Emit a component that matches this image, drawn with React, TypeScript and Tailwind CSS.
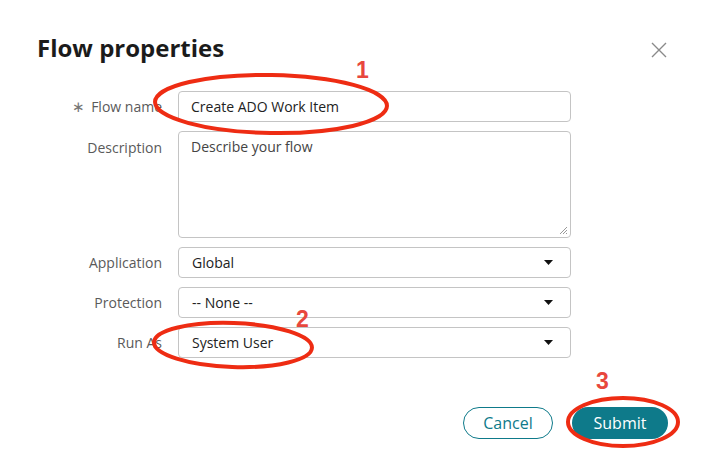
import type { ReactNode } from 'react'

const TEAL = '#0e7a8a'

function Caret() {
  return (
    <svg width="9" height="5" viewBox="0 0 9 5" className="shrink-0">
      <path d="M0 0 L9 0 L4.5 5 Z" fill="#111" />
    </svg>
  )
}

function Row({ label, required, top, children }: { label: string; required?: boolean; top?: boolean; children: ReactNode }) {
  return (
    <>
      <div className={`flex justify-end text-[14px] text-[#5a5a5a] ${top ? 'items-start pt-[6px]' : 'items-center'}`}>
        {required && <span className="mr-[6px] text-[15px] text-[#777]">∗</span>}
        {label}
      </div>
      {children}
    </>
  )
}

function SelectBox({ value }: { value: string }) {
  return (
    <div className="flex h-[31px] items-center justify-between rounded-[4px] border border-[#c4c4c4] bg-white pl-[13px] pr-[17px] text-[14px] text-[#222]">
      <span>{value}</span>
      <Caret />
    </div>
  )
}

function Annotations() {
  return (
    <>
      <svg className="pointer-events-none absolute inset-0" width="712" height="473">
        <ellipse cx="271" cy="104" rx="116" ry="29" fill="none" stroke="#ee2c13" strokeWidth="4" transform="rotate(1 271 104)" />
        <ellipse cx="233" cy="345" rx="79" ry="22" fill="none" stroke="#ee2c13" strokeWidth="4" transform="rotate(2 233 345)" />
        <ellipse cx="623" cy="422" rx="55" ry="24" fill="none" stroke="#ee2c13" strokeWidth="4" />
      </svg>
      <span className="absolute left-[356px] top-[59px] font-['Liberation_Sans',sans-serif] text-[23px] font-bold leading-none text-[#e8473d]">1</span>
      <span className="absolute left-[296px] top-[308px] font-['Liberation_Sans',sans-serif] text-[23px] font-bold leading-none text-[#e8473d]">2</span>
      <span className="absolute left-[596px] top-[370px] font-['Liberation_Sans',sans-serif] text-[23px] font-bold leading-none text-[#e8473d]">3</span>
    </>
  )
}

export default function App() {
  return (
    <div className="relative h-[473px] w-[712px] overflow-hidden bg-white font-['Open_Sans',sans-serif]">
      <div className="flex items-start justify-between pl-[37px] pr-[45px] pt-[33px]">
        <h2 className="text-[24px] font-bold leading-[30px] text-[#1b1b1b]">Flow properties</h2>
        <svg width="16" height="16" viewBox="0 0 16 16" className="mt-[9px]">
          <path d="M1 1 L15 15 M15 1 L1 15" stroke="#8a8a8a" strokeWidth="1.4" />
        </svg>
      </div>

      <div className="mt-[28px] grid grid-cols-[162px_393px] gap-x-[16px] gap-y-[9px]">
        <Row label="Flow name" required>
          <div className="flex h-[31px] items-center rounded-[4px] border border-[#c4c4c4] px-[12px] text-[14px] text-[#222]">
            Create ADO Work Item
          </div>
        </Row>
        <Row label="Description" top>
          <div className="relative h-[107px] rounded-[4px] border border-[#c4c4c4] px-[12px] pt-[4px] text-[14px] text-[#444]">
            Describe your flow
            <svg width="10" height="10" viewBox="0 0 10 10" className="absolute bottom-[2px] right-[2px]">
              <path d="M9 2 L2 9 M9 5 L5 9 M9 8 L8 9" stroke="#999" strokeWidth="1" />
            </svg>
          </div>
        </Row>
        <Row label="Application">
          <SelectBox value="Global" />
        </Row>
        <Row label="Protection">
          <SelectBox value="-- None --" />
        </Row>
        <Row label="Run As">
          <SelectBox value="System User" />
        </Row>
      </div>

      <div className="mt-[49px] flex justify-end gap-[19px] pr-[44px]">
        <button
          type="button"
          className="h-[32px] w-[90px] rounded-full border bg-white text-[16px]"
          style={{ borderColor: TEAL, color: TEAL }}
        >
          Cancel
        </button>
        <button
          type="button"
          className="h-[32px] w-[96px] rounded-full bg-[#0e7a8a] text-[16px] font-medium text-white"
        >
          Submit
        </button>
      </div>

      <Annotations />
    </div>
  )
}
